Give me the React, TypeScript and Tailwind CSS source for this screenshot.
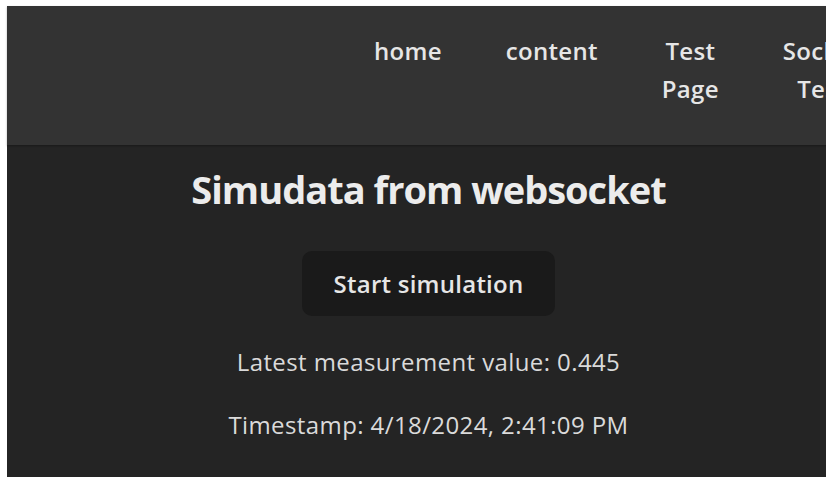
export default function App() {
  const nav = [
    { label: "home", lines: ["home"] },
    { label: "content", lines: ["content"] },
    { label: "Test Page", lines: ["Test", "Page"] },
    { label: "Socket Test", lines: ["Socket", "Test"] },
  ];
  return (
    <div
      className="w-[826px] h-[477px] overflow-hidden bg-white pl-[7px] pt-[6px]"
      style={{ fontFamily: '"Open Sans", "Noto Sans", sans-serif' }}
    >
      <div className="w-[843px] h-[471px] bg-[#242424] text-[#e6e6e6]">
        <header className="h-[139px] bg-[#333333] flex items-start pl-[367px] pt-[26px] gap-[64px] shadow-[0_1px_2px_rgba(0,0,0,0.3)]">
          {nav.map((n) => (
            <a
              key={n.label}
              className="flex flex-col items-center text-[24px] leading-[38px] font-semibold tracking-[0.3px] whitespace-nowrap"
            >
              {n.lines.map((l) => (
                <span key={l}>{l}</span>
              ))}
            </a>
          ))}
        </header>
        <main className="flex flex-col items-center pt-[16px]">
          <h1 className="text-[38px] leading-[56px] font-bold tracking-[-1px] text-[#ececec]">
            Simudata from websocket
          </h1>
          <button className="mt-[34px] w-[253px] h-[65px] rounded-[10px] bg-[#1a1a1a] text-[24px] font-semibold tracking-[0.25px]">
            Start simulation
          </button>
          <p className="mt-[30px] text-[24px] leading-[32px] tracking-[0.4px] text-[#dadada]">
            Latest measurement value: 0.445
          </p>
          <p className="mt-[31px] text-[24px] leading-[32px] tracking-[0.4px] text-[#dadada]">
            Timestamp: 4/18/2024, 2:41:09 PM
          </p>
        </main>
      </div>
    </div>
  );
}
